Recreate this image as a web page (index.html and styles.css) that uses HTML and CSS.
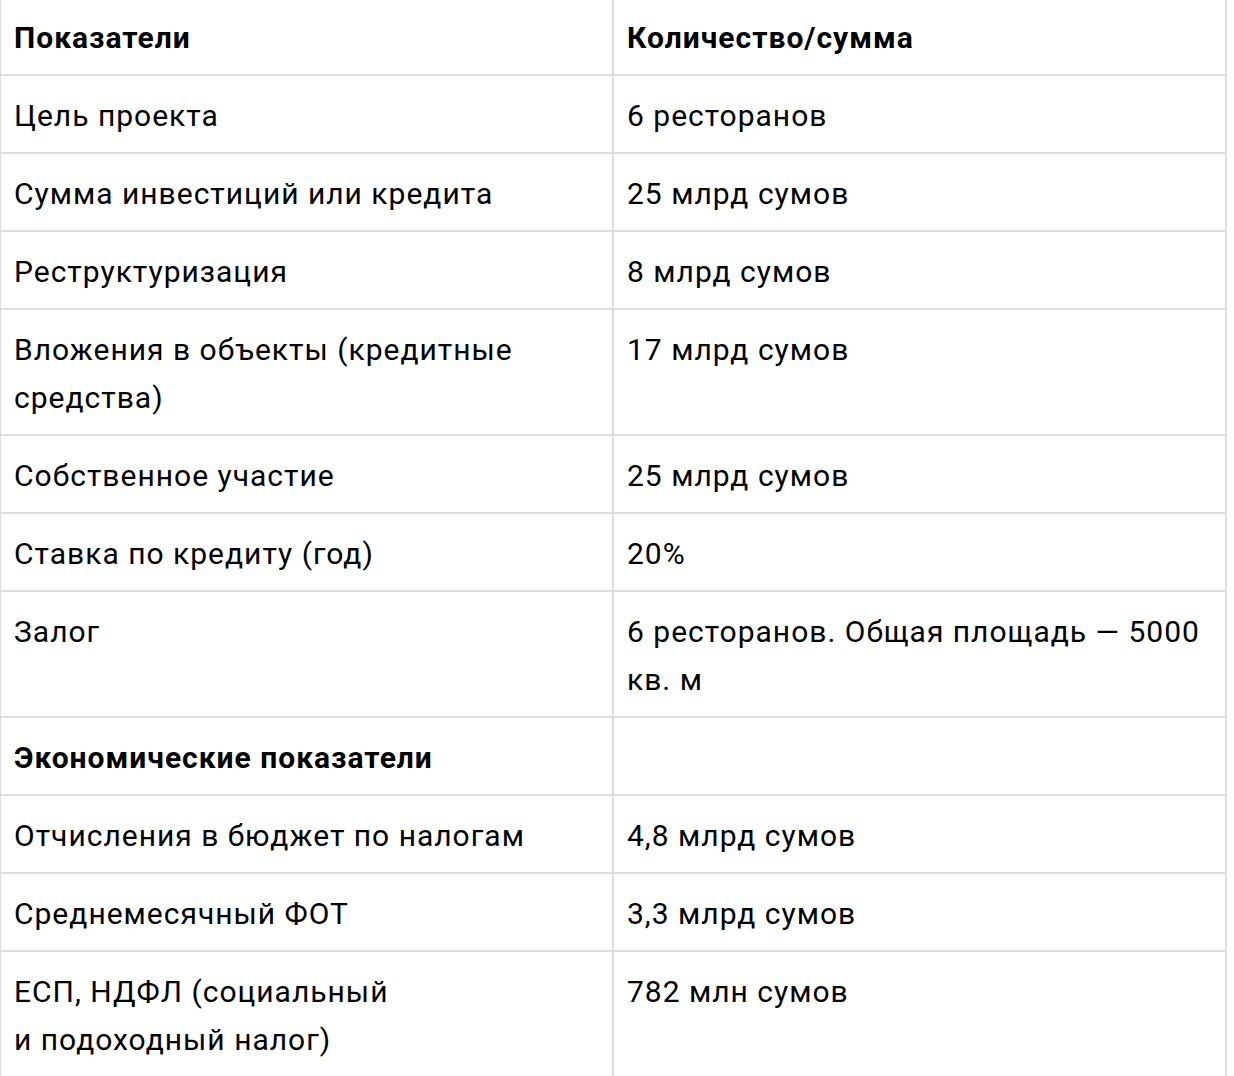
FILE: index.html
```html
<!DOCTYPE html>
<html lang="ru">
<head>
<meta charset="utf-8">
<title>Показатели</title>
<link rel="stylesheet" href="styles.css">
</head>
<body>
<table class="data">
  <tbody>
    <tr class="head"><td>Показатели</td><td>Количество/сумма</td></tr>
    <tr><td>Цель проекта</td><td>6 ресторанов</td></tr>
    <tr><td>Сумма инвестиций или кредита</td><td>25 млрд сумов</td></tr>
    <tr><td>Реструктуризация</td><td>8 млрд сумов</td></tr>
    <tr><td>Вложения в объекты (кредитные средства)</td><td>17 млрд сумов</td></tr>
    <tr><td>Собственное участие</td><td>25 млрд сумов</td></tr>
    <tr><td>Ставка по кредиту (год)</td><td>20%</td></tr>
    <tr><td>Залог</td><td>6 ресторанов. Общая площадь — 5000 кв. м</td></tr>
    <tr class="head"><td>Экономические показатели</td><td></td></tr>
    <tr><td>Отчисления в бюджет по налогам</td><td>4,8 млрд сумов</td></tr>
    <tr><td>Среднемесячный ФОТ</td><td>3,3 млрд сумов</td></tr>
    <tr><td>ЕСП, НДФЛ (социальный<br>и подоходный налог)</td><td>782 млн сумов</td></tr>
  </tbody>
</table>
</body>
</html>
```

FILE: styles.css
```css
html, body {
  margin: 0;
  padding: 0;
  background: #fff;
}
body {
  font-family: Roboto, "Liberation Sans", sans-serif;
  font-size: 30px;
  line-height: 48px;
  letter-spacing: 1px;
  color: #000;
}
.data {
  border-collapse: separate;
  border-spacing: 0;
  width: 1228px;
  margin: -4px 0 0 -1px;
  border-left: 2px solid #ddd;
  border-top: 2px solid #ddd;
  table-layout: fixed;
}
.data td {
  width: 50%;
  padding: 16px 13px 12px;
  vertical-align: top;
  border-right: 2px solid #ddd;
  border-bottom: 2px solid #ddd;
}
.data .head td {
  font-weight: 700;
  letter-spacing: 1px;
}
```
